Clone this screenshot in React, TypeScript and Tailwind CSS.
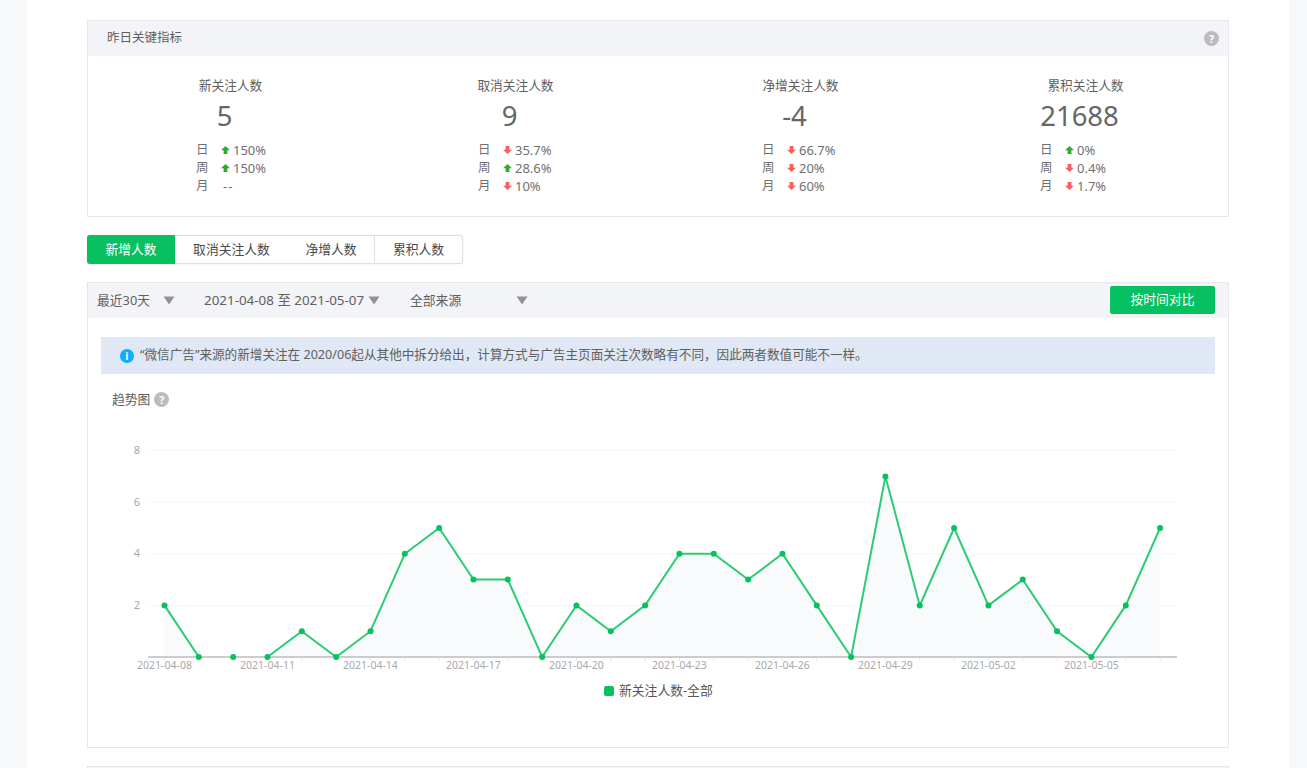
const FONT = "font-['Noto_Sans','Noto_Sans_CJK_SC',sans-serif]";

type Change = { label: string; dir?: "up" | "down"; value: string };

const STATS: { title: string; value: string; rowsClass: string; rows: Change[] }[] = [
  {
    title: "新关注人数",
    value: "5",
    rowsClass: "pl-[108px]",
    rows: [
      { label: "日", dir: "up", value: "150%" },
      { label: "周", dir: "up", value: "150%" },
      { label: "月", value: "--" },
    ],
  },
  {
    title: "取消关注人数",
    value: "9",
    rowsClass: "pl-[105px]",
    rows: [
      { label: "日", dir: "down", value: "35.7%" },
      { label: "周", dir: "up", value: "28.6%" },
      { label: "月", dir: "down", value: "10%" },
    ],
  },
  {
    title: "净增关注人数",
    value: "-4",
    rowsClass: "pl-[104px]",
    rows: [
      { label: "日", dir: "down", value: "66.7%" },
      { label: "周", dir: "down", value: "20%" },
      { label: "月", dir: "down", value: "60%" },
    ],
  },
  {
    title: "累积关注人数",
    value: "21688",
    rowsClass: "pl-[97px]",
    rows: [
      { label: "日", dir: "up", value: "0%" },
      { label: "周", dir: "down", value: "0.4%" },
      { label: "月", dir: "down", value: "1.7%" },
    ],
  },
];

const TABS = [
  { name: "新增人数", className: "w-[88px] bg-[#07c160] text-white rounded-l-[3px]" },
  { name: "取消关注人数", className: "w-[113px] bg-white text-[#4a4a4a] border-y border-[#e0e0e0]" },
  { name: "净增人数", className: "w-[87px] bg-white text-[#4a4a4a] border-y border-r border-[#e0e0e0]" },
  { name: "累积人数", className: "w-[88px] bg-white text-[#4a4a4a] border-y border-r border-[#e0e0e0] rounded-r-[3px]" },
];

const VALUES = [2, 0, 0, 0, 1, 0, 1, 4, 5, 3, 3, 0, 2, 1, 2, 4, 4, 3, 4, 2, 0, 7, 2, 5, 2, 3, 1, 0, 2, 5];
const LABELS = ["2021-04-08", "2021-04-11", "2021-04-14", "2021-04-17", "2021-04-20", "2021-04-23", "2021-04-26", "2021-04-29", "2021-05-02", "2021-05-05"];

const px = (i: number) => 164.5 + i * 34.33;
const py = (v: number) => 657 - v * 25.8;

function Arrow({ dir }: { dir: "up" | "down" }) {
  return (
    <svg width="9" height="10" viewBox="0 0 9 10" className="shrink-0">
      {dir === "up" ? (
        <path d="M4.5 1 L9 5.2 H6.4 V9 H2.6 V5.2 H0 Z" fill="#2bae2b" />
      ) : (
        <path d="M4.5 9 L9 4.8 H6.4 V1 H2.6 V4.8 H0 Z" fill="#fa5f5f" />
      )}
    </svg>
  );
}

function Help() {
  return (
    <span className="flex h-[15px] w-[15px] items-center justify-center rounded-full bg-[#bcbcbc] text-[11px] leading-none font-bold text-white">
      ?
    </span>
  );
}

function Caret() {
  return (
    <svg width="12" height="9" viewBox="0 0 12 9" className="shrink-0">
      <path d="M0.5 0.5 H11.5 L6 8.5 Z" fill="#929292" />
    </svg>
  );
}

function Chart() {
  // the 04-10 point has no line on either side of it
  const segments = [VALUES.slice(0, 2).map((v, i) => `${px(i)},${py(v)}`).join(" "), VALUES.slice(3).map((v, i) => `${px(i + 3)},${py(v)}`).join(" ")];
  const area = `${px(0)},657 ${VALUES.map((v, i) => `${px(i)},${py(v)}`).join(" ")} ${px(29)},657`;

  return (
    <svg viewBox="88 420 1140 290" className="block h-[290px] w-[1140px]">
      {[8, 6, 4, 2].map((v) => (
        <g key={v}>
          <line x1="148" x2="1177" y1={py(v)} y2={py(v)} stroke="#f7f7f7" />
          <text x="137" y={py(v) + 3.5} textAnchor="middle" fontSize="11" fill="#a8a8a8">
            {v}
          </text>
        </g>
      ))}
      <polygon points={area} fill="#f9fafc" />
      {VALUES.map((_, i) => (
        <line key={i} x1={px(i)} x2={px(i)} y1="657" y2="661" stroke="#e3e7ee" />
      ))}
      <line x1="148" x2="1177" y1="657" y2="657" stroke="#cccccc" strokeWidth="2" />
      {segments.map((points) => (
        <polyline key={points} points={points} fill="none" stroke="#2ccb74" strokeWidth="2" />
      ))}
      {VALUES.map((v, i) => (
        <circle key={i} cx={px(i)} cy={py(v)} r="3" fill="#07c160" />
      ))}
      {LABELS.map((label, i) => (
        <text key={label} x={px(i * 3)} y="669" textAnchor="middle" fontSize="10.5" fill="#a8a8a8">
          {label}
        </text>
      ))}
      <rect x="604" y="686" width="10" height="10" rx="2" fill="#07c160" />
      <text x="619" y="695" fontSize="12.8" fill="#555555">
        新关注人数-全部
      </text>
    </svg>
  );
}

export default function App() {
  return (
    <div className={`h-screen overflow-hidden bg-[#f6f8f9] px-[27px] pr-[18px] text-[#606060] ${FONT}`}>
      <div className="h-full bg-white px-[60px] pt-[20px]">
        <div className="h-[197px] w-[1142px] border border-[#e7e7eb]">
          <div className="flex h-[35px] items-center justify-between bg-[#f3f4f8] pr-[9px] pl-[19px] text-[12.5px]">
            <span>昨日关键指标</span>
            <Help />
          </div>
          <div className="grid grid-cols-4 pt-[19px]">
            {STATS.map((stat) => (
              <div key={stat.title} className="flex flex-col items-center">
                <div className="text-[12.7px] leading-[20px]">{stat.title}</div>
                <div className="mt-[1px] pr-[12px] text-[27.5px] leading-[40px] text-[#666]">{stat.value}</div>
                <div className={`mt-[5px] self-stretch ${stat.rowsClass}`}>
                  {stat.rows.map((row) => (
                    <div key={row.label} className="flex h-[18px] items-center text-[13px] leading-[18px] text-[#707070]">
                      <span className="w-[25px] text-[12.5px]">{row.label}</span>
                      {row.dir && <Arrow dir={row.dir} />}
                      <span className={row.dir ? "ml-[3px]" : "ml-[2px] tracking-[1px]"}>{row.value}</span>
                    </div>
                  ))}
                </div>
              </div>
            ))}
          </div>
        </div>

        <div className="mt-[18px] flex h-[29px] w-fit rounded-[3px] shadow-[0_0_1px_rgba(0,0,0,0.25)]">
          {TABS.map((tab) => (
            <div key={tab.name} className={`flex items-center justify-center text-[12.8px] ${tab.className}`}>
              {tab.name}
            </div>
          ))}
        </div>

        <div className="mt-[18px] h-[466px] w-[1142px] border border-[#e7e7eb]">
          <div className="flex h-[35px] items-center justify-between bg-[#f3f4f8] pr-[13px] pl-[9px] text-[12.8px]">
            <div className="flex items-center">
              <span className="w-[66px]">最近30天</span>
              <Caret />
              <span className="ml-[29px] w-[164px] text-[13.4px]">2021-04-08 至 2021-05-07</span>
              <Caret />
              <span className="ml-[30px] w-[106px]">全部来源</span>
              <Caret />
            </div>
            <button className="-mt-[1px] h-[28px] w-[105px] rounded-[2px] bg-[#07c160] text-[12.8px] text-white">按时间对比</button>
          </div>

          <div className="mx-[13px] mt-[19px] flex h-[37px] w-[1114px] items-center bg-[#dfe8f4] pl-[19px] text-[12.6px]">
            <span className="mr-[6px] flex h-[14px] w-[14px] items-center justify-center rounded-full bg-[#10aeff] text-[11px] leading-none font-bold text-white">
              i
            </span>
            <span>“微信广告”来源的新增关注在 2020/06起从其他中拆分给出，计算方式与广告主页面关注次数略有不同，因此两者数值可能不一样。</span>
          </div>

          <div className="mt-[16px] flex items-center gap-[4px] pl-[24px] text-[12.8px] leading-[18px]">
            <span>趋势图</span>
            <Help />
          </div>

          <div className="mt-[12px]">
            <Chart />
          </div>
        </div>

        <div className="mt-[18px] h-[40px] w-[1142px] border border-[#e7e7eb] bg-[#f3f4f8]" />
      </div>
    </div>
  );
}
